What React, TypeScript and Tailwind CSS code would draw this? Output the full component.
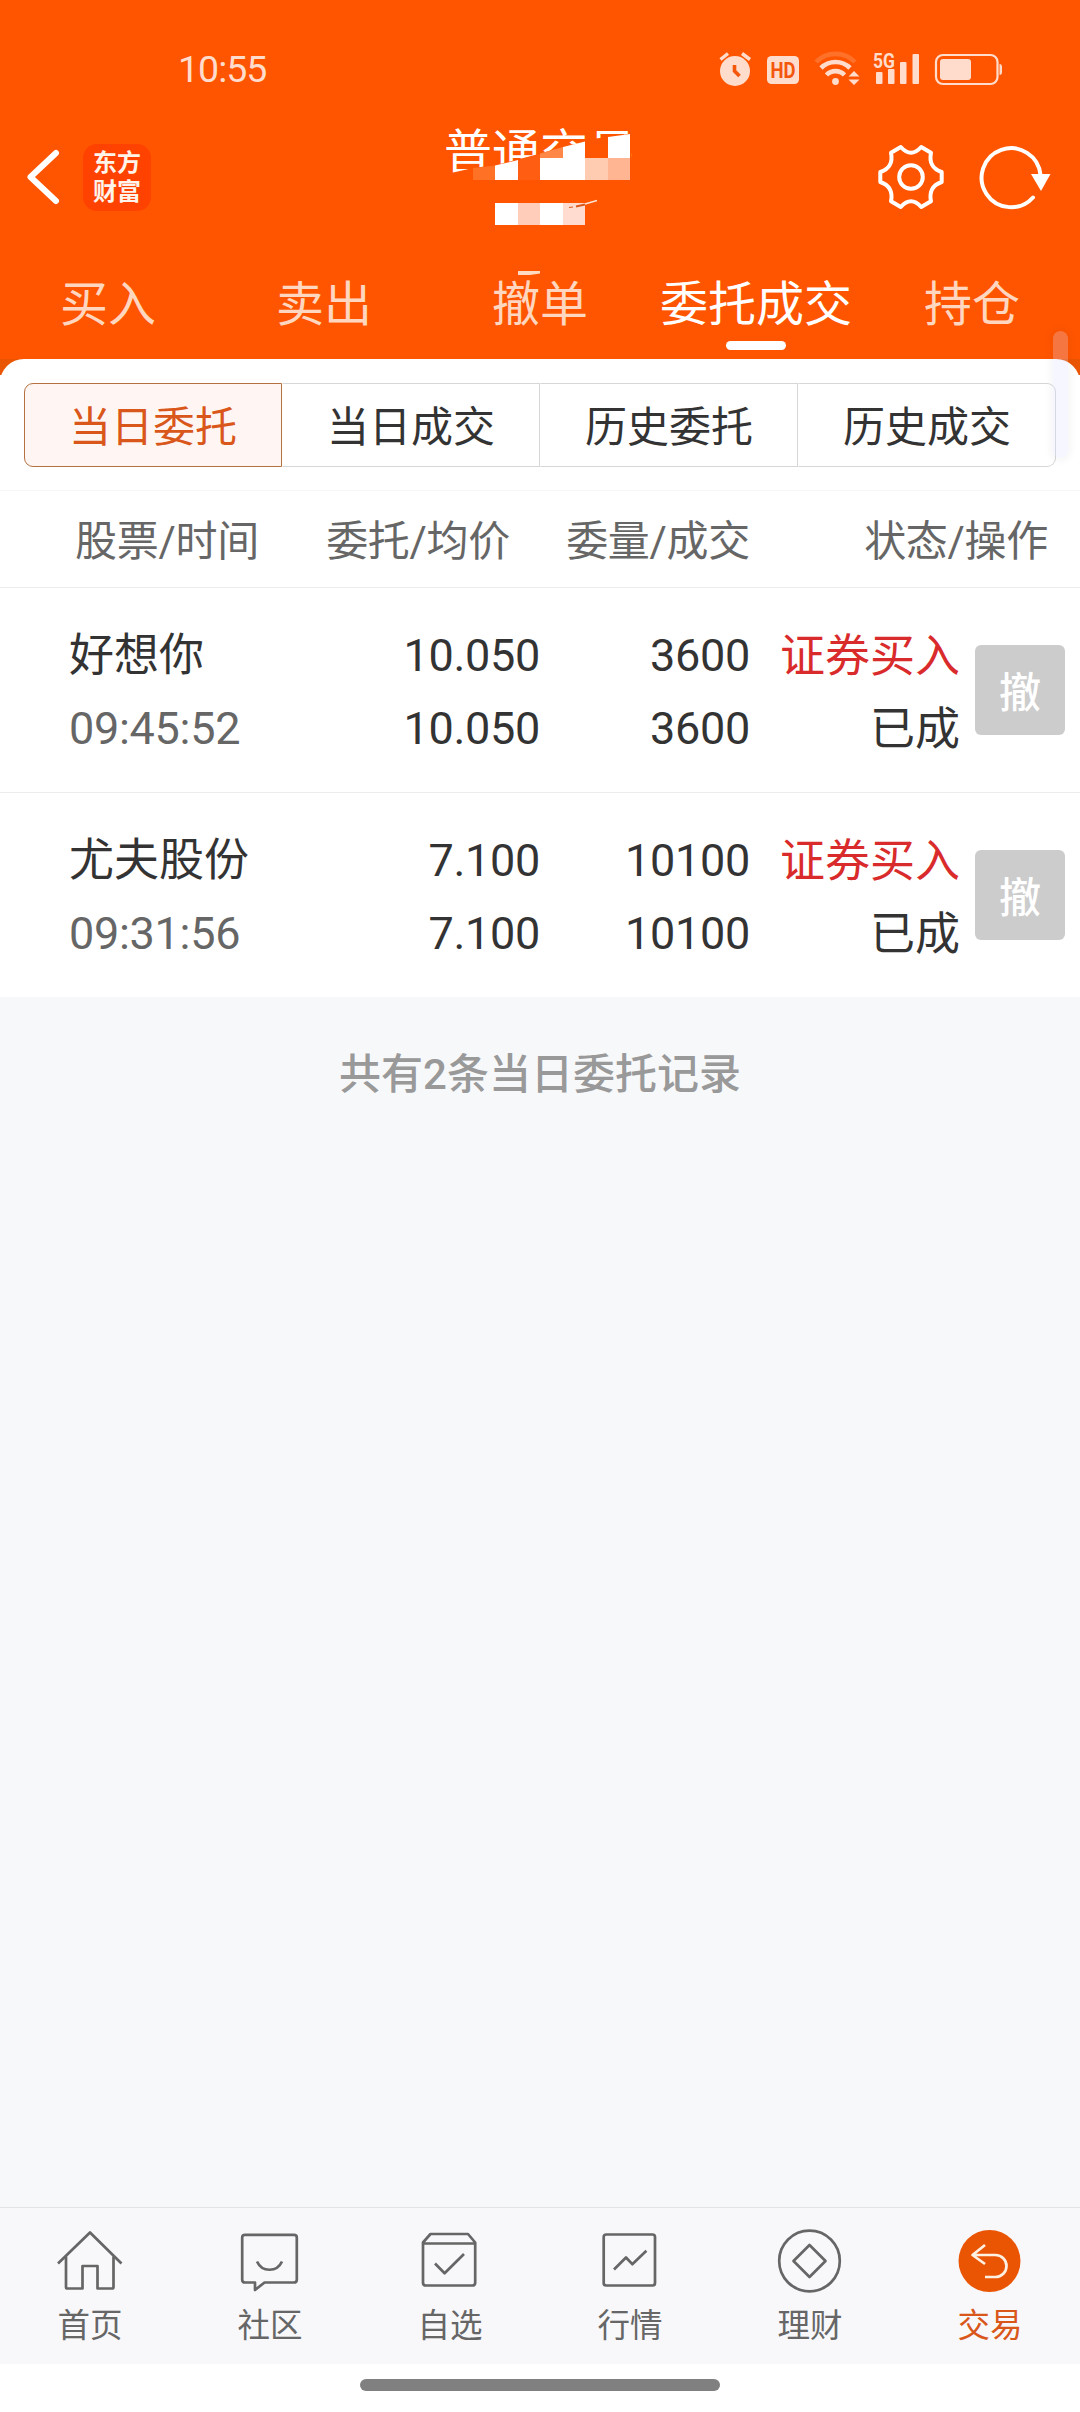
import { useState } from "react";
import clsx from "clsx";

const TABS = ["买入", "卖出", "撤单", "委托成交", "持仓"];
const FILTERS = ["当日委托", "当日成交", "历史委托", "历史成交"];

type Order = {
    name: string;
    time: string;
    price: string;
    avgPrice: string;
    amount: string;
    filled: string;
    side: string;
    status: string;
}

const ORDERS: Order[] = [
    { name: "好想你", time: "09:45:52", price: "10.050", avgPrice: "10.050", amount: "3600", filled: "3600", side: "证券买入", status: "已成" },
    { name: "尤夫股份", time: "09:31:56", price: "7.100", avgPrice: "7.100", amount: "10100", filled: "10100", side: "证券买入", status: "已成" },
];

function StatusBar() {
    return <div className="flex h-[138px] items-center justify-between pl-[178px] pr-[78px] text-[#ffdccb]">
        <span className="pt-px text-[37.500px] tracking-[-1px] leading-none">10:55</span>
        <svg width="284" height="40" viewBox="0 0 284 40" fill="currentColor">
            {/* alarm */}
            <circle cx="17" cy="22" r="15" />
            <path d="M2.500 10.500 10 4.500M24 4.500 32 10.500" stroke="currentColor" strokeWidth="3.500" />
            <path d="M16.500 16v6l5 5" fill="none" stroke="#f4560c" strokeWidth="3.600" />
            {/* HD */}
            <rect x="49" y="7" width="32" height="28" rx="4.500" />
            <text x="65" y="29" fontSize="22.500" fontWeight="700" textAnchor="middle" textLength="25" lengthAdjust="spacingAndGlyphs" fill="#f4560c">HD</text>
            {/* wifi */}
            <g fill="none" stroke="currentColor" strokeWidth="4.600">
                <path d="M98 13a27.500 27.500 0 0 1 39 0" opacity=".2" />
                <path d="M103 19a20.500 20.500 0 0 1 29 0" />
                <path d="M108.500 26a12.500 12.500 0 0 1 18 0" />
            </g>
            <circle cx="117.500" cy="32.500" r="3.400" />
            <path d="M136 22l5.500 5.500h-11zM136 36l5.500-5.500h-11z" />
            {/* signal */}
            <text x="155" y="18.500" fontSize="21" fontWeight="700" textLength="22" lengthAdjust="spacingAndGlyphs">5G</text>
            <rect x="158" y="23" width="6.500" height="12" rx="1" />
            <rect x="170" y="20" width="6.500" height="15" rx="1" />
            <rect x="182" y="13" width="6.500" height="22" rx="1" />
            <rect x="194.500" y="5" width="6.500" height="30" rx="1" />
            {/* battery */}
            <rect x="218" y="6" width="61.500" height="29" rx="7" fill="none" stroke="currentColor" strokeWidth="2.200" />
            <rect x="222" y="10" width="31" height="21" rx="3" />
            <path d="M281.500 15q2.500 0 2.500 3v5q0 3-2.500 3z" />
        </svg>
    </div>
}

function GearIcon() {
    return <svg width="70" height="70" viewBox="0 0 70 70" fill="none" stroke="white" strokeWidth="4" strokeLinejoin="round">
        <circle cx="35" cy="35" r="11.800" />
        <path d="M24.800 5Q35 16.500 45.200 5L55 10.800C53 20 56.500 27 65.700 30V40C56.500 43 53 50 55 59.200L45.200 65Q35 53.500 24.800 65L15 59.200C17 50 13.500 43 4.300 40V30C13.500 27 17 20 15 10.800Z" />
    </svg>
}

function RefreshIcon() {
    return <svg width="74" height="70" viewBox="0 0 74 70" fill="none">
        <path d="M56 55.500A29.500 29.500 0 1 1 63.500 33" stroke="white" strokeWidth="4" strokeLinecap="round" />
        <path d="M54 32h19.500L64 49z" fill="white" />
    </svg>
}

// Pixel blocks hiding the account name under the title
function Mosaic() {
    return <svg className="absolute left-[-4px] top-[-4px]" width="196" height="155" viewBox="440 125 196 155">
        <path d="M473 168 496 165 535 155 563 147 585 141.500 596 138.500 608 137 631 133.500V182H440V175.500Z" fill="#ff5500" />
        <path d="M473 168 495 165.500V180H473Z" fill="#ff7124" />
        <path d="M495 165.500 518 160V180H495Z" fill="white" />
        <path d="M518 160 540 154V180H518Z" fill="#ff5d12" />
        <path d="M540 153.500 563 147V158H540Z" fill="#ff8748" />
        <path d="M563 147 585 141.500V180H540V158H563Z" fill="white" />
        <path d="M608 137 630 134V158H608Z" fill="white" />
        <path d="M585 158H608V180H585Z" fill="#ffcbb1" />
        <path d="M608 158H630V180H608Z" fill="#ffb591" />
        <path d="M495 203H518V225H495ZM540 203H563V225H540Z" fill="white" />
        <path d="M518 203H540V225H518Z" fill="#ffcdba" />
        <path d="M563 203H585V225H563Z" fill="#ffdccf" />
        <path d="M576 206.500 585 204.500" stroke="#d9571a" strokeWidth="1.800" />
        <path d="M569 207.500 573 207" stroke="#d9571a" strokeWidth="1" />
        <path d="M585 204 597 200.500" stroke="#ffe3d3" strokeWidth="1.500" />
        <path d="M518 271H540V273.500L530 275H518Z" fill="#ffd9c0" />
    </svg>
}

function TitleBar() {
    return <div className="flex h-[78px] items-center justify-between pl-[26px] pr-[29px]">
        <div className="flex w-[380px] items-center">
            <svg width="34" height="56" viewBox="0 0 34 56" fill="none" stroke="white" strokeWidth="6" strokeLinecap="round" strokeLinejoin="round">
                <path d="M30 4 4.500 28 30 52" />
            </svg>
            <div className="ml-[23px] flex h-[67px] w-[68px] flex-col items-center justify-center rounded-[14px] bg-[#ff4200] pt-[2px] text-[24px] font-bold leading-[29px] text-[#fff3ea]">
                <span>东方</span>
                <span>财富</span>
            </div>
        </div>
        <div className="relative -mt-[49px] ml-[3px] h-12 w-[192px] whitespace-nowrap text-[48px] leading-[48px] text-white">
            普通交易
            <Mosaic />
        </div>
        <div className="flex w-[380px] items-center justify-end gap-[31px]">
            <GearIcon />
            <RefreshIcon />
        </div>
    </div>
}

const NAV = [
    {
        label: "首页",
        icon: <>
            <path d="M4 38.500 36 7.500 67.500 38.500" />
            <path d="M12 31.500V62q0 1.500 1.500 1.500H28.500V41H43.500V63.500H58q1.500 0 1.500-1.500V31.500" />
        </>,
    },
    {
        label: "社区",
        icon: <>
            <path d="M11 9.800H60q2.800 0 2.800 2.800V54.700q0 2.800-2.800 2.800H30.500L21 65V57.500H11q-2.800 0-2.800-2.800V12.600q0-2.800 2.800-2.800Z" />
            <path d="M23 36.500C28 47.500 43 47.500 48 36.500" />
        </>,
    },
    {
        label: "自选",
        icon: <>
            <path d="M9 18.500H61.200V57.700q0 2.800-2.800 2.800H11.800Q9 60.500 9 57.700V17.500L16.500 9H54L61.200 17.500V19" />
            <path d="M21 38.500 30.600 48.200 50 29" />
        </>,
    },
    {
        label: "行情",
        icon: <>
            <rect x="9.700" y="9.500" width="51.300" height="51" rx="2.500" />
            <path d="M20 44.500 32 32.500 38.300 39.200 52.400 25.800" />
        </>,
    },
    {
        label: "理财",
        icon: <>
            <circle cx="35.500" cy="36" r="30.300" />
            <path d="M35.500 20 51.500 36 35.500 52 19.500 36Z" />
        </>,
    },
    {
        label: "交易",
        icon: <>
            <circle cx="35.500" cy="36" r="31" fill="#ea5504" stroke="none" />
            <path d="M31 20 18.500 30 31 39M19 30H41.500a11 11 0 0 1 0 22H31" stroke="#fff1e2" />
        </>,
    },
];

export default function App() {
    const [tab, setTab] = useState<number>(3);
    const [filter, setFilter] = useState<number>(0);

    return <div className="relative flex h-[2412px] w-[1080px] flex-col overflow-hidden bg-[#f7f8fa] font-[Roboto,'Noto_Sans_CJK_SC',sans-serif] text-[#333]">
        <header className="h-[359px] bg-[#ff5500]">
            <StatusBar />
            <TitleBar />
            <nav className="grid h-[143px] grid-cols-5 pt-[53px]">
                {
                    TABS.map((item, index) => (
                        <div key={item} onClick={() => setTab(index)} className="flex cursor-pointer flex-col items-center">
                            <span className={clsx("whitespace-nowrap text-[48px] leading-[72px]", tab === index ? "text-white" : "text-[#ffd6bf]")}>{item}</span>
                            { tab === index && <div className="h-[9px] w-[60px] rounded-full bg-white" /> }
                        </div>
                    ))
                }
            </nav>
        </header>

        <main className="bg-[linear-gradient(#ea5504_16px,white_16px)]">
            <div className="h-[131px] rounded-t-[24px] bg-white px-6 pt-6">
                <div className="grid h-[84px] grid-cols-4">
                    {
                        FILTERS.map((item, index) => (
                            <div
                                key={item}
                                onClick={() => setFilter(index)}
                                className={clsx(
                                    "flex cursor-pointer items-center justify-center border pt-[5px] text-[42px] first:rounded-l-[9px] last:rounded-r-[9px]",
                                    filter === index ? "border-[#b5713f] bg-[#fff6f3] text-[#d9571a]" : "border-[#d5d6d7] border-l-transparent"
                                )}
                            >
                                {item}
                            </div>
                        ))
                    }
                </div>
            </div>

            <div className="grid h-[98px] grid-cols-[300px_210px_240px_298px] items-center border-y border-t-[#f6f6f6] border-b-[#eceded] pt-[4px] text-right text-[42px] tracking-[-0.3px] text-[#666]">
                <span className="pl-[75px] text-left">股票/时间</span>
                <span>委托/均价</span>
                <span>委量/成交</span>
                <span>状态/操作</span>
            </div>

            {
                ORDERS.map((order) => (
                    <div key={order.name} className="grid h-[205px] grid-cols-[300px_240px_210px_210px_105px] border-b border-[#ebecec] pt-[31px] text-right text-[45px] leading-[73px] last:h-[204px] last:border-transparent">
                        <div className="flex flex-col pl-[69px] text-left">
                            <span className="pt-px leading-[72px]">{order.name}</span>
                            <span className="tracking-[-0.3px] text-[#666]">{order.time}</span>
                        </div>
                        <div className="flex flex-col tracking-[-0.3px]">
                            <span>{order.price}</span>
                            <span>{order.avgPrice}</span>
                        </div>
                        <div className="flex flex-col tracking-[-0.3px]">
                            <span>{order.amount}</span>
                            <span>{order.filled}</span>
                        </div>
                        <div className="flex flex-col pt-px">
                            <span className="text-[#d92b2b]">{order.side}</span>
                            <span>{order.status}</span>
                        </div>
                        <button className="ml-auto mt-[26px] flex size-[90px] items-center justify-center rounded-md bg-[#ccc] pt-[7px] text-[42px] font-medium leading-none text-white">撤</button>
                    </div>
                ))
            }
        </main>

        <p className="pt-[45px] text-center text-[42px] font-medium leading-[66px] text-[#999]">共有{ORDERS.length}条当日委托记录</p>

        <footer className="mt-auto">
            <div className="grid h-[157px] grid-cols-6 border-t border-[#e2e3e4] bg-[#f8f8fb] pt-[17px]">
                {
                    NAV.map((item, index) => (
                        <div key={item.label} className={clsx("flex flex-col items-center", index === 5 ? "text-[#d9571a]" : "text-[#666]")}>
                            <svg width="72" height="72" viewBox="0 0 72 72" fill="none" stroke="currentColor" strokeWidth="2.700" strokeLinejoin="round">
                                {item.icon}
                            </svg>
                            <span className="mt-[8px] text-[32.500px] leading-[43px]">{item.label}</span>
                        </div>
                    ))
                }
            </div>
            <div className="flex h-12 justify-center bg-white pt-[15px]">
                <div className="h-3 w-[360px] rounded-full bg-[#808080]" />
            </div>
        </footer>

        {/* edge panel handle */}
        <div className="absolute left-[1053px] top-[331px] h-[127px] w-[15px] rounded-full bg-[#d7dbff]/25 shadow-[0_0_6px_4px_rgba(0,0,0,0.03)]" />
    </div>
}
